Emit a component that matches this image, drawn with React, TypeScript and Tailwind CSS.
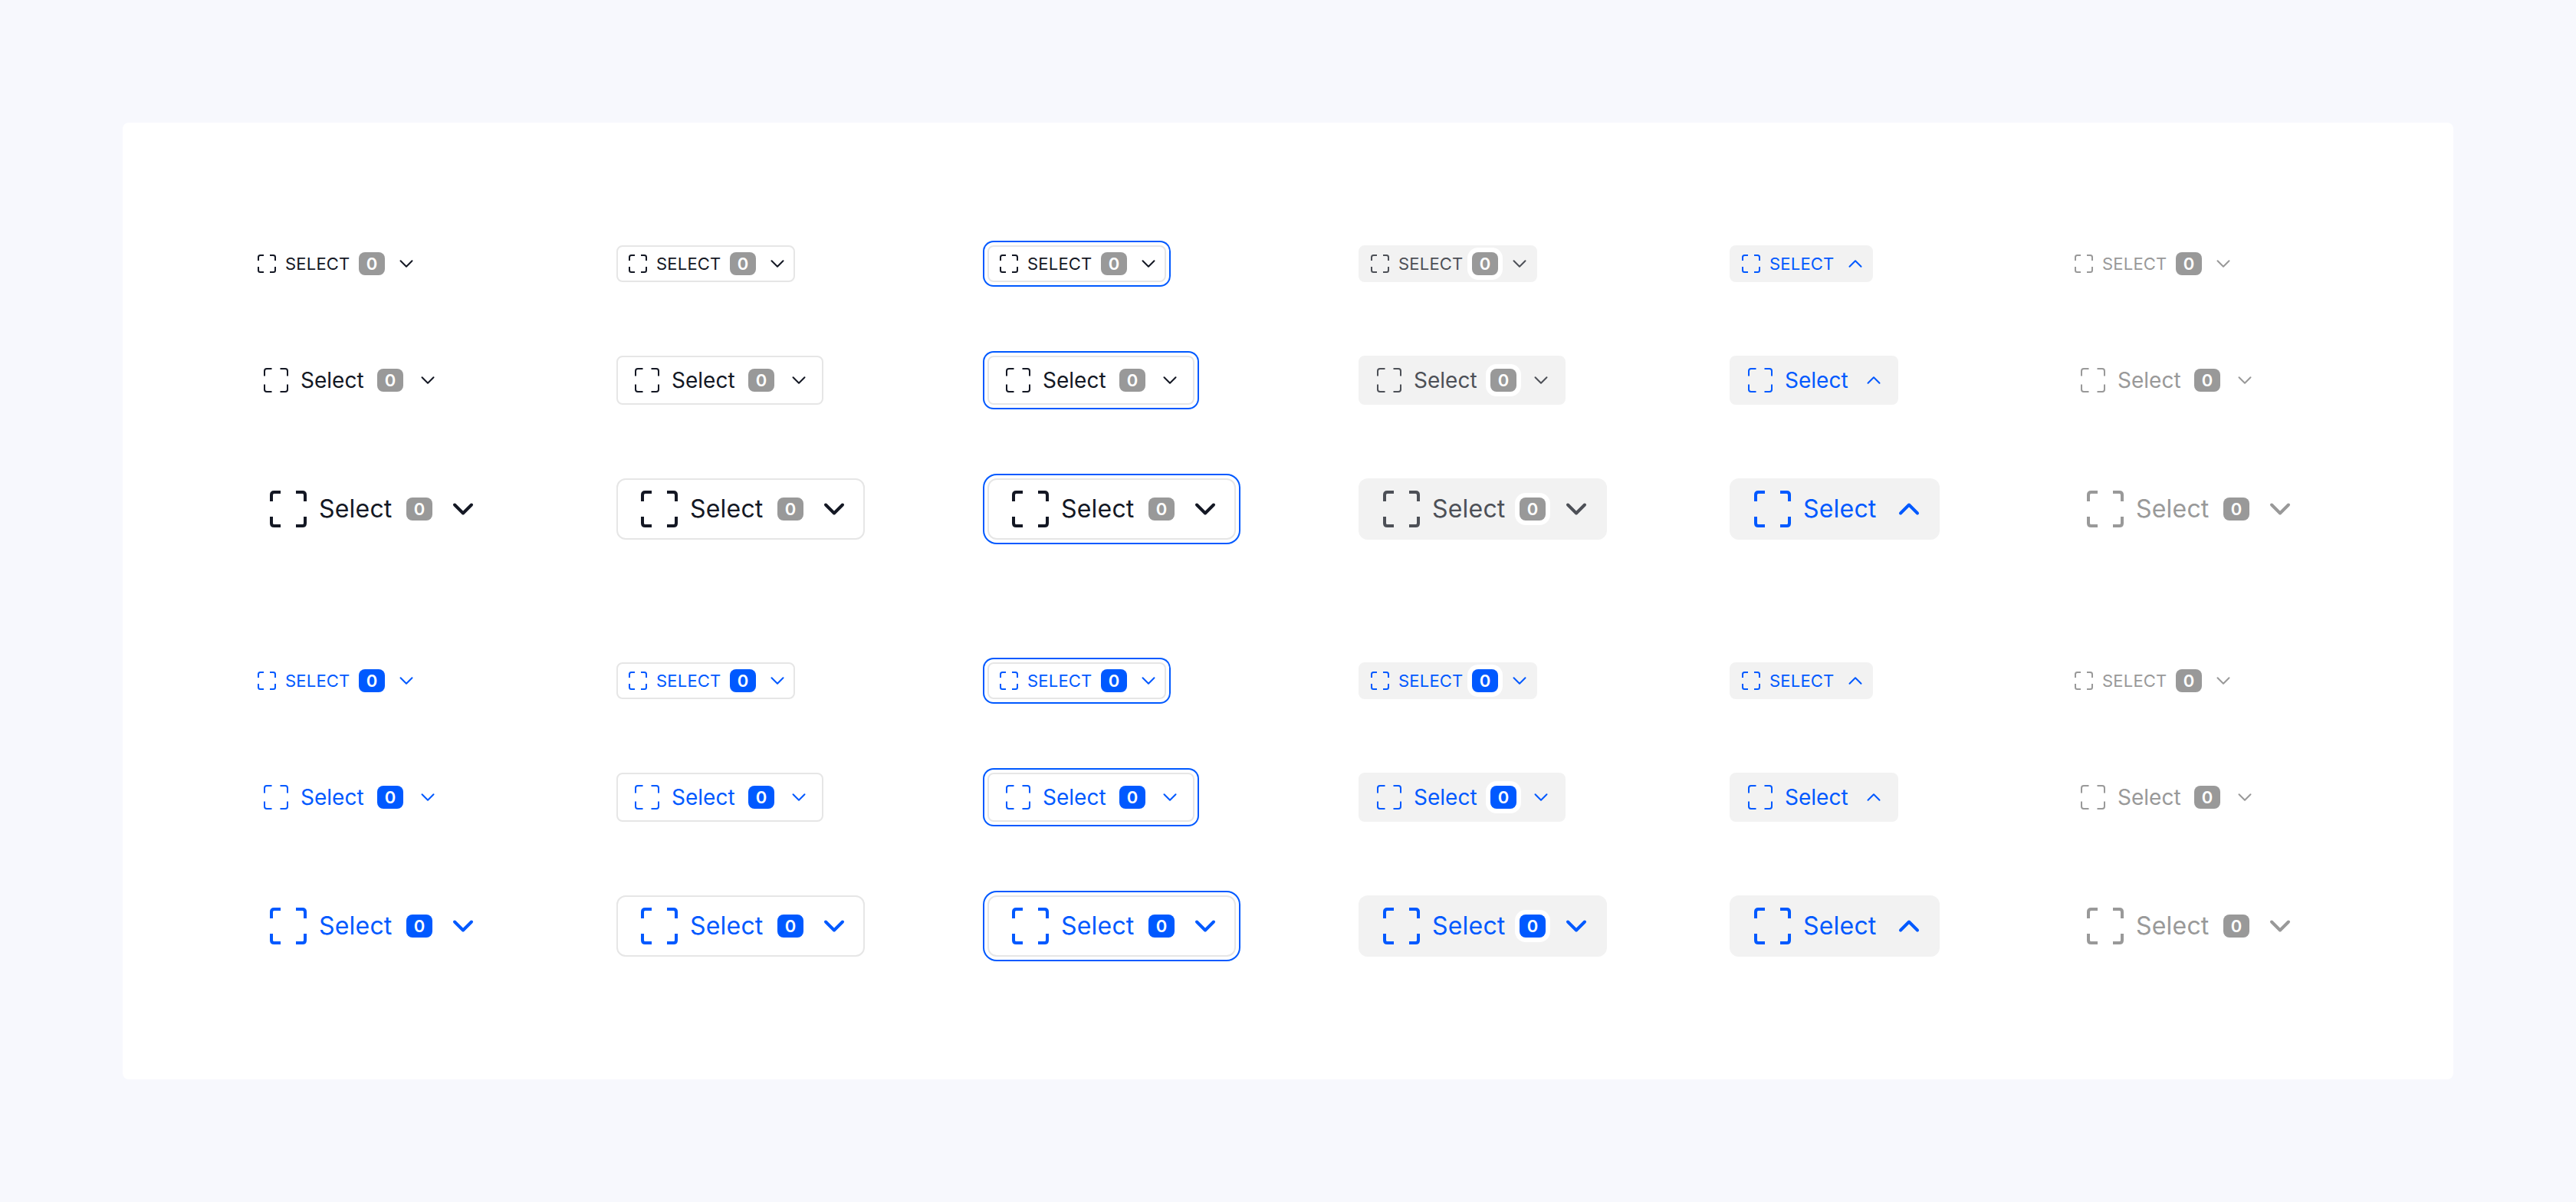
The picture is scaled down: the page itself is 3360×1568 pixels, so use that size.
import React from "react";

type Size = "sm" | "md" | "lg";
type Look = "ghost" | "outline" | "focus" | "filled" | "open" | "disabled";

const sizes: Record<Size, { box: string; text: string; icon: number; bl: number; sw: number; r: number; chev: number; chevHalf: number; chevSw: number; label: string; radius: string }> = {
  sm: { box: "h-[48px] pl-[14px] pr-[5px] gap-[12px]", text: "w-[84px] text-[22px] leading-[30px] tracking-[0.2px]", icon: 24, bl: 8, sw: 2, r: 2.5, chev: 32, chevHalf: 7.5, chevSw: 2, label: "SELECT", radius: "rounded-[8px]" },
  md: { box: "h-[64px] pl-[22px] pr-[14px] gap-[16px]", text: "w-[84px] text-[28px] leading-[40px]", icon: 32, bl: 10.5, sw: 2, r: 3, chev: 32, chevHalf: 7.5, chevSw: 2, label: "Select", radius: "rounded-[8px]" },
  lg: { box: "h-[80px] pl-[30px] pr-[14px] gap-[16px]", text: "w-[98px] text-[32px] leading-[48px] tracking-[0.2px]", icon: 48, bl: 14, sw: 4, r: 3.5, chev: 48, chevHalf: 11, chevSw: 4, label: "Select", radius: "rounded-[12px]" },
};

function Frame({ size, sw, bl, r }: { size: number; sw: number; bl: number; r: number }) {
  const a = sw / 2;
  const b = size - sw / 2;
  const d = [
    `M${a} ${bl}V${a + r}Q${a} ${a} ${a + r} ${a}H${bl}`,
    `M${size - bl} ${a}H${b - r}Q${b} ${a} ${b} ${a + r}V${bl}`,
    `M${a} ${size - bl}V${b - r}Q${a} ${b} ${a + r} ${b}H${bl}`,
    `M${size - bl} ${b}H${b - r}Q${b} ${b} ${b} ${b - r}V${size - bl}`,
  ].join("");
  return (
    <svg width={size} height={size} viewBox={`0 0 ${size} ${size}`} fill="none" stroke="currentColor" strokeWidth={sw} strokeLinecap="butt" className="shrink-0">
      <path d={d} />
    </svg>
  );
}

function Chevron({ size, half, sw, up }: { size: number; half: number; sw: number; up: boolean }) {
  const c = size / 2;
  const t = c - half / 2;
  const u = c + half / 2;
  const d = up
    ? `M${c - half} ${u}L${c} ${t}L${c + half} ${u}`
    : `M${c - half} ${t}L${c} ${u}L${c + half} ${t}`;
  return (
    <svg width={size} height={size} viewBox={`0 0 ${size} ${size}`} fill="none" stroke="currentColor" strokeWidth={sw} strokeLinecap="round" strokeLinejoin="round" className="shrink-0">
      <path d={d} />
    </svg>
  );
}

function Select({ size, look, active }: { size: Size; look: Look; active: boolean }) {
  const z = sizes[size];
  const lookCls: Record<Look, string> = {
    ghost: "border-2 border-transparent",
    outline: "border-2 border-[#e6e6e6] bg-white",
    focus: "border-2 border-[#e6e6e6] bg-white shadow-[0_0_0_4px_#ffffff,0_0_0_6px_#0059ff]",
    filled: "border-2 border-[#f2f2f2] bg-[#f2f2f2]",
    open: "border-2 border-[#f2f2f2] bg-[#f2f2f2]",
    disabled: "border-2 border-transparent",
  };
  let color = active ? "text-[#0059ff]" : "text-[#141824]";
  if (look === "filled" && !active) color = "text-[#4d5057]";
  if (look === "open") color = "text-[#0059ff]";
  if (look === "disabled") color = "text-[#999999]";
  const badgeBg = active && look !== "disabled" ? "bg-[#0059ff]" : "bg-[#999999]";
  const halo = look === "filled" ? "shadow-[0_0_0_6px_#ffffff]" : "";
  return (
    <div className={`inline-flex items-center self-start font-['Inter',sans-serif] ${z.box} ${z.radius} ${lookCls[look]} ${color}`}>
      <Frame size={z.icon} sw={z.sw} bl={z.bl} r={z.r} />
      <span className={z.text}>{z.label}</span>
      {look !== "open" && (
        <span className={`flex h-[30px] w-[34px] items-center justify-center rounded-[8px] text-[22px] leading-none font-semibold text-white ${badgeBg} ${halo}`}>0</span>
      )}
      <Chevron size={z.chev} half={z.chevHalf} sw={z.chevSw} up={look === "open"} />
    </div>
  );
}

const looks: Look[] = ["ghost", "outline", "focus", "filled", "open", "disabled"];
const colWidth: Record<Look, string> = {
  ghost: "w-[324px]",
  outline: "w-[324px]",
  focus: "w-[324px]",
  filled: "w-[324px]",
  open: "w-[274px]",
  disabled: "w-[324px]",
};
const rowSizes: Size[] = ["sm", "md", "lg"];

function Section({ active }: { active: boolean }) {
  return (
    <div className="flex gap-[160px]">
      {looks.map((l) => (
        <div key={l} className={`flex flex-col gap-[96px] ${colWidth[l]}`}>
          {rowSizes.map((s) => (
            <Select key={s} size={s} look={l} active={active} />
          ))}
        </div>
      ))}
    </div>
  );
}

export default function App() {
  return (
    <div className="h-[1568px] w-[3360px] bg-[#f7f8fd] p-[160px]">
      <div className="flex flex-col gap-[160px] rounded-[8px] bg-white p-[160px]">
        <Section active={false} />
        <Section active={true} />
      </div>
    </div>
  );
}
